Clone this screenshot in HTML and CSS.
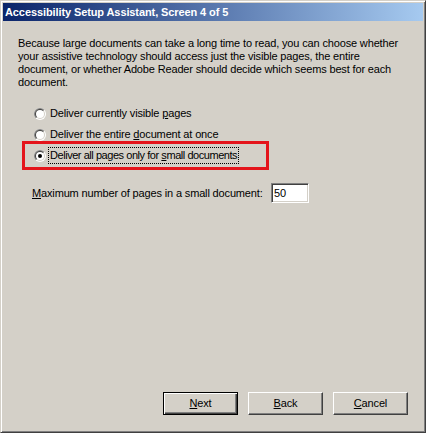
FILE: index.html
```html
<!DOCTYPE html>
<html>
<head>
<meta charset="utf-8">
<link rel="stylesheet" href="styles.css">
</head>
<body>
<div class="window">
  <div class="titlebar"><span class="title">Accessibility Setup Assistant, Screen 4 of 5</span></div>
  <div class="content">
    <p class="intro">Because large documents can take a long time to read, you can choose whether your assistive technology should access just the visible pages, the entire document, or whether Adobe Reader should decide which seems best for each document.</p>
    <div class="options">
      <div class="option">
        <svg class="radio" width="12" height="12" viewBox="0 0 12 12"><defs><clipPath id="tl1"><polygon points="0,0 12,0 0,12"/></clipPath></defs><circle cx="6" cy="6" r="6" fill="#fff"/><circle cx="6" cy="6" r="6" fill="#808080" clip-path="url(#tl1)"/><circle cx="6" cy="6" r="5" fill="#d4d0c8"/><circle cx="6" cy="6" r="5" fill="#404040" clip-path="url(#tl1)"/><circle cx="6" cy="6" r="4" fill="#fff"/></svg>
        <span class="label">Deliver currently visible <u>p</u>ages</span>
      </div>
      <div class="option">
        <svg class="radio" width="12" height="12" viewBox="0 0 12 12"><defs><clipPath id="tl2"><polygon points="0,0 12,0 0,12"/></clipPath></defs><circle cx="6" cy="6" r="6" fill="#fff"/><circle cx="6" cy="6" r="6" fill="#808080" clip-path="url(#tl2)"/><circle cx="6" cy="6" r="5" fill="#d4d0c8"/><circle cx="6" cy="6" r="5" fill="#404040" clip-path="url(#tl2)"/><circle cx="6" cy="6" r="4" fill="#fff"/></svg>
        <span class="label">Deliver the entire <u>d</u>ocument at once</span>
      </div>
      <div class="option highlighted">
        <svg class="radio" width="12" height="12" viewBox="0 0 12 12"><defs><clipPath id="tl3"><polygon points="0,0 12,0 0,12"/></clipPath></defs><circle cx="6" cy="6" r="6" fill="#fff"/><circle cx="6" cy="6" r="6" fill="#808080" clip-path="url(#tl3)"/><circle cx="6" cy="6" r="5" fill="#d4d0c8"/><circle cx="6" cy="6" r="5" fill="#404040" clip-path="url(#tl3)"/><circle cx="6" cy="6" r="4" fill="#fff"/><circle cx="6" cy="6" r="2" fill="#000"/></svg>
        <span class="label focus">Deliver all pages only for <u>s</u>mall documents</span>
      </div>
    </div>
    <div class="max-row">
      <span class="max-label"><u>M</u>aximum number of pages in a small document:</span>
      <span class="field">50</span>
    </div>
    <div class="buttons">
      <div class="btn default"><span class="btn-face"><u>N</u>ext</span></div>
      <div class="btn"><span class="btn-face"><u>B</u>ack</span></div>
      <div class="btn"><span class="btn-face"><u>C</u>ancel</span></div>
    </div>
  </div>
</div>
</body>
</html>
```
FILE: styles.css
```css
html, body {
  margin: 0;
  padding: 0;
  background: #d4d0c8;
}
.window {
  width: 426px;
  height: 433px;
  box-sizing: border-box;
  border: 1px solid;
  border-color: #d4d0c8 #404040 #404040 #d4d0c8;
  box-shadow: inset 1px 1px 0 #ffffff, inset -1px -1px 0 #808080;
  padding: 2px;
  background: #d4d0c8;
  display: flex;
  flex-direction: column;
  font-family: "Liberation Sans", Arial, sans-serif;
  font-size: 11px;
  letter-spacing: -0.15px;
  color: #000;
}
.titlebar {
  height: 18px;
  flex: none;
  background: linear-gradient(to right, #0a246a, #a6caf0);
  display: flex;
  align-items: center;
  padding-left: 2px;
}
.title {
  color: #fff;
  font-weight: bold;
  font-size: 11px;
  letter-spacing: -0.1px;
}
.content {
  flex: 1;
  display: flex;
  flex-direction: column;
  padding: 16px 15px 15px 15px;
}
.intro {
  margin: 0;
  line-height: 13px;
  width: 388px;
}
.options {
  margin-top: 16px;
  margin-left: 16px;
  display: flex;
  flex-direction: column;
  gap: 4px;
}
.option {
  display: flex;
  align-items: center;
  height: 17px;
  position: relative;
}
.radio {
  flex: none;
  margin-right: 2px;
}
.label {
  padding: 1px 1px;
  line-height: 13px;
  border: 1px dotted transparent;
}
.label.focus {
  border-color: #000;
  letter-spacing: -0.45px;
}
.highlighted::after {
  content: "";
  position: absolute;
  left: -12px;
  top: -6px;
  width: 247px;
  height: 29px;
  box-sizing: border-box;
  border: 3px solid #e4141b;
}
.max-row {
  margin-top: 19px;
  margin-left: 14px;
  display: flex;
  align-items: center;
  height: 20px;
}
.max-label {
  width: 239px;
}
.field {
  width: 38px;
  height: 20px;
  box-sizing: border-box;
  background: #fff;
  border: 1px solid;
  border-color: #808080 #ffffff #ffffff #808080;
  box-shadow: inset 1px 1px 0 #404040, inset -1px -1px 0 #d4d0c8;
  padding: 3px 0 0 2px;
  line-height: 13px;
}
.buttons {
  margin-top: auto;
  display: flex;
  justify-content: flex-end;
  gap: 10px;
}
.btn {
  width: 75px;
  height: 23px;
  box-sizing: border-box;
  border: 1px solid;
  border-color: #ffffff #404040 #404040 #ffffff;
  box-shadow: inset -1px -1px 0 #808080;
  display: flex;
  align-items: center;
  justify-content: center;
}
.btn.default {
  border: 1px solid #000;
  box-shadow: inset 1px 1px 0 #ffffff, inset -1px -1px 0 #404040, inset -2px -2px 0 #808080;
}
.btn-face {
  line-height: 13px;
}
```
